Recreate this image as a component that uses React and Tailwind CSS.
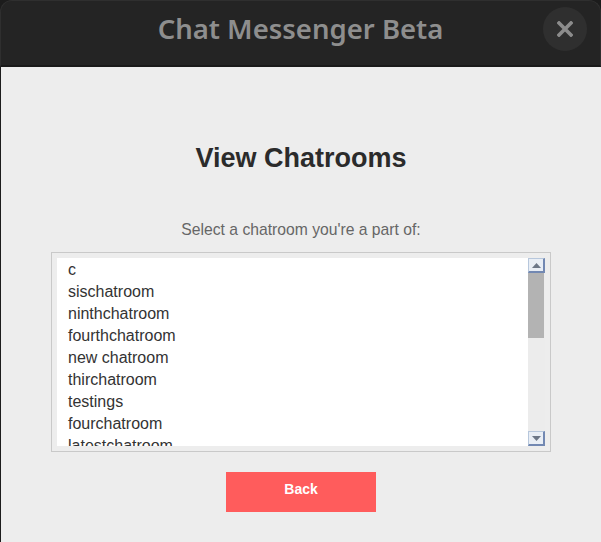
import React from "react";

const rooms = [
  "c",
  "sischatroom",
  "ninthchatroom",
  "fourthchatroom",
  "new chatroom",
  "thirchatroom",
  "testings",
  "fourchatroom",
  "latestchatroom",
];

const ScrollButton = ({ down }) => (
  <div className="h-[15px] w-[17px] bg-[#e9eef5] border-t border-l border-[#b7c7dc] border-r-2 border-b-2 border-r-[#7288b2] border-b-[#7288b2] flex items-center justify-center">
    <svg width="9" height="5" viewBox="0 0 9 5">
      {down ? (
        <polygon points="0,0 9,0 4.5,5" fill="#6d7787" />
      ) : (
        <polygon points="0,5 9,5 4.5,0" fill="#6d7787" />
      )}
    </svg>
  </div>
);

const App = () => {
  return (
    <div className="w-[601px] h-[542px] bg-[#1c1c1c] flex flex-col overflow-hidden font-['Liberation_Sans',Arial,sans-serif]">
      {/* Title bar */}
      <div className="h-[67px] shrink-0 bg-[#242424] rounded-t-[12px] border-t border-x border-[#2f2f2f] border-b-2 border-b-[#1a1a1a] relative flex items-center justify-center">
        <h1 className="font-['Noto_Sans',sans-serif] font-semibold text-[27.5px] text-[#8e8e8e] -mt-[8px]">
          Chat Messenger Beta
        </h1>
        <button className="absolute right-[13px] top-[6px] w-[44px] h-[44px] rounded-full bg-[#2f2f2f] flex items-center justify-center">
          <svg width="16" height="16" viewBox="0 0 16 16">
            <path
              d="M2 2 L14 14 M14 2 L2 14"
              stroke="#8c8c8c"
              strokeWidth="3.6"
              strokeLinecap="square"
            />
          </svg>
        </button>
      </div>

      {/* Content */}
      <div className="flex-1 bg-[#ededed] ml-px flex flex-col items-center pt-[76px]">
        <h2 className="text-[27px] leading-[31px] font-bold text-[#2b2b2b]">
          View Chatrooms
        </h2>
        <p className="mt-[47px] text-[15.7px] leading-[18px] text-[#666666]">
          Select a chatroom you're a part of:
        </p>

        <div className="mt-[13px] w-[500px] h-[200px] border border-[#c9c9c9] p-[5px] flex">
          <ul className="w-[471px] h-[188px] pt-px bg-white overflow-hidden">
            {rooms.map((room) => (
              <li
                key={room}
                className="h-[22px] leading-[22px] pl-[11px] text-[16px] text-[#333333]"
              >
                {room}
              </li>
            ))}
          </ul>
          <div className="w-[17px] h-[188px] bg-[#ececec] flex flex-col">
            <ScrollButton />
            <div className="h-[65px] w-[16px] bg-[#b3b3b3]" />
            <div className="flex-1" />
            <ScrollButton down />
          </div>
        </div>

        <button className="mt-[20px] w-[150px] h-[40px] bg-[#ff5c5c] text-white text-[14px] leading-[16px] font-bold pt-[9px] flex justify-center items-start">
          Back
        </button>
      </div>
    </div>
  );
};

export default App;
